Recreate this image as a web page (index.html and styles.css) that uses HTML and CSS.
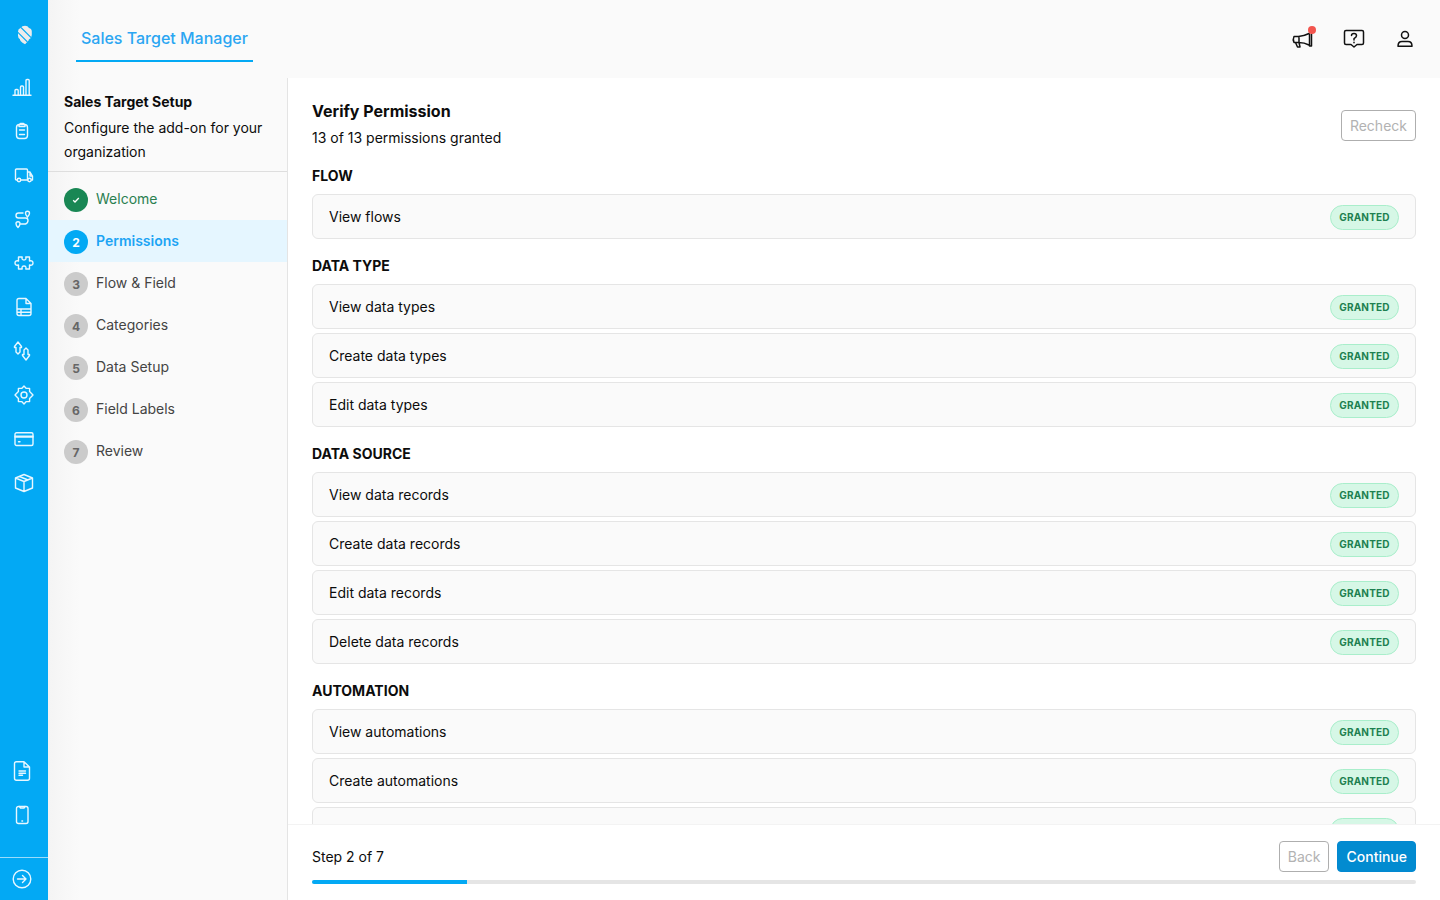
FILE: index.html
```html
<!DOCTYPE html>
<html lang="en">
<head>
<meta charset="utf-8">
<meta name="viewport" content="width=device-width, initial-scale=1">
<title>Sales Target Manager</title>
<link rel="stylesheet" href="styles.css">
</head>
<body>
<div class="app">
  <nav class="rail" aria-label="Main">
    <a class="rail-logo" href="#" aria-label="Home"><svg width="16" height="20" viewBox="0 0 16 20"><clipPath id="leaf"><path d="M8 .8Q5 .8 3.600 3 1 3.800 1 6.500v4Q1 13 2.800 14q.5 3 2.700 3.700L8 19.200l2.500-2.500q1.200-.6 1.400-2.200 2.900-1.500 2.900-4.500V6.500q0-3-2.800-3.500Q10.800.8 8 .8z"/></clipPath><g clip-path="url(#leaf)"><path fill="#ececec" d="M0 0h16v20H0z"/><path d="M2 .5 17 15.500M-1 5.500l14 14" stroke="#03a9f4" stroke-width="1.100" fill="none"/></g></svg></a>
    <a class="rail-link" href="#" aria-label="Dashboard"><svg viewBox="0 0 20 20"><path d="M1 18.200h18M3 18v-4.500q0-1 1-1h1.200q1 0 1 1V18M8.500 18v-8q0-1 1-1h1q1 0 1 1v8M14 18V3.500q0-1 1-1h1.200q1 0 1 1V18"/></svg></a>
    <a class="rail-link" href="#" aria-label="Tasks"><svg viewBox="0 0 20 20"><rect x="4.500" y="3.500" width="11" height="14" rx="3"/><path d="M7 5.500V4l1.500-1.500h3L13 4v1.500zM7.500 9h5M7.500 13.500h5"/></svg></a>
    <a class="rail-link wide" href="#" aria-label="Deliveries"><svg viewBox="0 0 20 20"><path d="M3.500 15H2.500q-1 0-1-1V5q0-1 1-1h10q1 0 1 1v10H7M13.500 7h2.500l2.500 4v4h-1M16 7v4h2.500"/><circle cx="5" cy="15" r="1.700"/><circle cx="15.500" cy="15" r="1.700"/></svg></a>
    <a class="rail-link" href="#" aria-label="Routes"><svg viewBox="0 0 20 20"><path d="M11 4H6.500Q4 4 4 6.500T6.500 9h7q2.500 0 2.500 2.500T13.500 15H9M15.500 8q-2-2.200-2-3.800a2 2 0 0 1 4 0Q17.500 5.800 15.500 8zM6 18.500q-2-2.200-2-3.800a2 2 0 0 1 4 0Q8 16.300 6 18.500z"/></svg></a>
    <a class="rail-link wide" href="#" aria-label="Add-ons"><svg viewBox="0 0 20 20"><path d="M4.500 4h3.700q-.8 3 1.800 3t1.800-3h3.700v4q3.500-.8 3.500 2t-3.500 2v4h-3.700q.8-3-1.800-3t-1.800 3H4.500v-4Q1 12.800 1 10t3.500-2z"/></svg></a>
    <a class="rail-link wide" href="#" aria-label="Reports"><svg viewBox="0 0 20 20"><path d="M12 1.500H5q-2 0-2 2v13q0 2 2 2h10q2 0 2-2v-10zM12 1.500v5h5M3 12h14M3 15.200h14M7 12v6.500"/></svg></a>
    <a class="rail-link" href="#" aria-label="Transfers"><svg viewBox="0 0 20 20"><path d="M6 1 9.500 5.500v1H8V11L6 13 4 11V6.500H2.500v-1zM14 19l-3.500-4.500v-1H12V9l2-2 2 2v4.500h1.500v1z"/></svg></a>
    <a class="rail-link wide" href="#" aria-label="Settings"><svg viewBox="0 0 20 20"><path d="m10 1 2.300 2.400h3.300v3.200L19 10l-3.400 3.400v3.200h-3.300L10 19l-2.300-2.400H4.400v-3.200L1 10l3.400-3.400V3.400h3.300z"/><circle cx="10" cy="10" r="3"/></svg></a>
    <a class="rail-link wide" href="#" aria-label="Billing"><svg viewBox="0 0 20 20"><rect x="1" y="3.800" width="18" height="12.700" rx="1.500"/><path d="M1 7.200h18M1 8h18M4.500 12.800h1.500"/></svg></a>
    <a class="rail-link wide" href="#" aria-label="Products"><svg viewBox="0 0 20 20"><path d="m10 1.500 8.500 3.500v10L10 18.500 1.500 15V5zM1.500 5 10 8.500 18.500 5M10 8.500v10M5.500 3.500 14 7"/></svg></a>
    <div class="rail-bottom">
      <a class="rail-link" href="#" aria-label="Documents"><svg viewBox="0 0 20 20"><path d="M12 .7H4.500q-2 0-2 2v14.600q0 2 2 2h11q2 0 2-2V6zM12 .7V6h5.500M7 10h6.500M7 12.200h6.500M7 14.300h3.500"/></svg></a>
      <a class="rail-link" href="#" aria-label="Mobile"><svg viewBox="0 0 20 20"><rect x="4.500" y="1.500" width="11.500" height="17" rx="2"/><path d="M7.500 1.500 8.500 3H12l1-1.500M9.900 16h.7"/></svg></a>
    </div>
    <a class="rail-expand" href="#" aria-label="Expand menu"><svg viewBox="0 0 20 20"><circle cx="10" cy="10" r="8.800"/><path d="M5.500 10h8.500M10.500 6.500 14 10l-3.500 3.500"/></svg></a>
  </nav>

  <div class="page">
    <header class="topbar">
      <a class="tab" href="#">Sales Target Manager</a>
      <div class="tools">
        <button class="tool" aria-label="Announcements"><svg width="24" height="24" viewBox="0 0 24 24"><path d="M3 9.500h4.500Q13 9 18 6.500M3 9.500Q1.500 12.500 3 15.500h4.500q6 0 10.500 2.500M8 9.500v6M4.500 15.500 6.500 20h2.500L8 15.500M18.500 7v12h2V7"/></svg><span class="dot"></span></button>
        <button class="tool" aria-label="Help"><svg width="24" height="24" viewBox="0 0 24 24"><path d="M4 3.500h16q1.500 0 1.500 1.500v11q0 1.500-1.500 1.500h-5l-3 2.500-3-2.500H4q-1.500 0-1.500-1.500V5Q2.500 3.500 4 3.500zM9.500 8.500Q9.500 6.500 12 6.500t2.500 2.200Q14.500 10 12 11.700V13M12 15.300v.4"/></svg></button>
        <button class="tool" aria-label="Account"><svg width="24" height="24" viewBox="0 0 24 24"><circle cx="12" cy="8" r="3.500"/><path d="M5 19.200q0-4.700 4-4.700h6q4 0 4 4.700z"/></svg></button>
      </div>
    </header>

    <div class="body">
      <aside class="setup">
        <div class="setup-head">
          <h2>Sales Target Setup</h2>
          <p>Configure the add-on for your organization</p>
        </div>
        <ol class="steps">
          <li class="step done"><span class="num"><svg width="8" height="8" viewBox="0 0 8 8"><path d="m1.200 4.200 1.800 1.800L6.800 2"/></svg></span><span class="name">Welcome</span></li>
          <li class="step current" aria-current="step"><span class="num">2</span><span class="name">Permissions</span></li>
          <li class="step"><span class="num">3</span><span class="name">Flow &amp; Field</span></li>
          <li class="step"><span class="num">4</span><span class="name">Categories</span></li>
          <li class="step"><span class="num">5</span><span class="name">Data Setup</span></li>
          <li class="step"><span class="num">6</span><span class="name">Field Labels</span></li>
          <li class="step"><span class="num">7</span><span class="name">Review</span></li>
        </ol>
      </aside>

      <main class="main">
        <div class="scroll">
          <div class="intro">
            <div>
              <h1>Verify Permission</h1>
              <p>13 of 13 permissions granted</p>
            </div>
            <button class="btn" disabled>Recheck</button>
          </div>
          <section class="group">
            <h3>FLOW</h3>
            <ul>
              <li class="perm">View flows<span class="badge">GRANTED</span></li>
            </ul>
          </section>
          <section class="group">
            <h3>DATA TYPE</h3>
            <ul>
              <li class="perm">View data types<span class="badge">GRANTED</span></li>
              <li class="perm">Create data types<span class="badge">GRANTED</span></li>
              <li class="perm">Edit data types<span class="badge">GRANTED</span></li>
            </ul>
          </section>
          <section class="group">
            <h3>DATA SOURCE</h3>
            <ul>
              <li class="perm">View data records<span class="badge">GRANTED</span></li>
              <li class="perm">Create data records<span class="badge">GRANTED</span></li>
              <li class="perm">Edit data records<span class="badge">GRANTED</span></li>
              <li class="perm">Delete data records<span class="badge">GRANTED</span></li>
            </ul>
          </section>
          <section class="group">
            <h3>AUTOMATION</h3>
            <ul>
              <li class="perm">View automations<span class="badge">GRANTED</span></li>
              <li class="perm">Create automations<span class="badge">GRANTED</span></li>
              <li class="perm"><span class="badge"></span></li>
            </ul>
          </section>
        </div>
        <footer class="footer">
          <div class="footer-row">
            <span>Step 2 of 7</span>
            <div class="actions">
              <button class="btn" disabled>Back</button>
              <button class="btn primary">Continue</button>
            </div>
          </div>
          <div class="track" role="progressbar" aria-label="Setup progress" aria-valuenow="14" aria-valuemin="0" aria-valuemax="100"><div class="fill" style="width:14%"></div></div>
        </footer>
      </main>
    </div>
  </div>
</div>
</body>
</html>
```
FILE: styles.css
```css
* { box-sizing: border-box; }
body, h1, h2, h3, p, ul, ol { margin: 0; padding: 0; }
ul, ol { list-style: none; }
body {
  font: 14px/21px Inter, "Liberation Sans", sans-serif;
  color: #0c0c0c;
  background: #fff;
}
a { color: inherit; text-decoration: none; }
button { font: inherit; cursor: pointer; }
.app { display: flex; height: 100vh; overflow: hidden; }

.rail {
  width: 48px;
  flex: none;
  display: flex;
  flex-direction: column;
  background: #03a9f4;
}
.rail svg { display: block; }
.rail-logo { height: 65px; padding: 25px 0 0 17px; }
.rail-link { display: flex; align-items: center; height: 44px; padding-left: 12px; }
.rail-link.wide { padding-left: 14px; }
.rail-link svg, .rail-expand svg {
  width: 20px;
  height: 20px;
  fill: none;
  stroke: #e8f7ff;
  stroke-width: 1.4;
  stroke-linejoin: round;
  stroke-linecap: round;
}
.rail-bottom { margin-top: auto; padding-bottom: 20px; }
.rail-expand {
  display: flex;
  align-items: center;
  height: 43px;
  padding-left: 12px;
  border-top: 1px solid #9bdcfb;
}

.page { flex: 1; min-width: 0; display: flex; flex-direction: column; background: linear-gradient(90deg, #f4f4f4, #fafafa 32px); }
.topbar {
  flex: none;
  display: flex;
  justify-content: space-between;
  align-items: flex-start;
  height: 78px;
  padding: 16px 23px 0 28px;
}
.tab {
  padding: 10px 5px;
  border-bottom: 2px solid #03a9f4;
  font-size: 16px;
  line-height: 24px;
  font-weight: 500;
  color: #2ba6f2;
}
.tools { display: flex; gap: 27px; padding-top: 11px; }
.tool { position: relative; display: block; width: 24px; height: 24px; padding: 0; border: 0; background: none; }
.tool svg { display: block; fill: none; stroke: #111; stroke-width: 1.5; stroke-linejoin: round; stroke-linecap: round; }
.dot { position: absolute; top: -1px; right: -1px; width: 8px; height: 8px; border-radius: 50%; background: #f2554e; }

.body { flex: 1; min-height: 0; display: flex; }
.setup { width: 240px; flex: none; border-right: 1px solid #e4e4e4; }
.setup-head { padding: 14px 16px 7px; border-bottom: 1px solid #dedede; }
.setup-head h2 { font-size: 14px; line-height: 19px; font-weight: 700; padding-bottom: 5px; }
.setup-head p { line-height: 24px; }
.steps { padding-top: 6px; }
.step { display: flex; gap: 8px; padding: 10px 16px 8px; color: #444; }
.num {
  display: flex;
  align-items: center;
  justify-content: center;
  width: 24px;
  height: 24px;
  border-radius: 50%;
  background: #cbcbcb;
  color: #666;
  font-size: 12px;
  font-weight: 700;
}
.num svg { fill: none; stroke: #fff; stroke-width: 1.3; }
.done { color: #2a8050; }
.done .num { background: #198754; }
.current { background: #e5f6ff; color: #1ca4f4; font-weight: 600; }
.current .num { background: #03a9f4; color: #fff; }

.main { flex: 1; min-width: 0; display: flex; flex-direction: column; background: #fff; }
.scroll { flex: 1; min-height: 0; overflow-y: auto; scrollbar-width: none; padding: 24px 24px 0; }
.intro { display: flex; justify-content: space-between; align-items: center; }
.intro h1 { font-size: 16px; line-height: 18px; font-weight: 700; padding-bottom: 6px; }
.intro p { line-height: 23px; }
.btn {
  height: 31px;
  padding: 0 8px;
  border: 1px solid #aeaeae;
  border-radius: 4px;
  background: #fff;
  color: #0c0c0c;
}
.btn:disabled { color: #b2b2b2; cursor: default; }
.btn.primary { border-color: #0288d1; background: #028bd0; color: #fff; font-weight: 500; }
.group { padding-top: 16px; }
.group h3 { font-size: 14px; line-height: 21px; font-weight: 700; padding-bottom: 8px; }
.group ul { display: grid; gap: 4px; }
.perm {
  display: flex;
  align-items: flex-start;
  justify-content: space-between;
  min-height: 45px;
  padding: 10px 16px 8px;
  border: 1px solid #e5e5e5;
  border-radius: 6px;
  background: #fafafa;
  line-height: 23px;
}
.badge {
  min-width: 69px;
  min-height: 25px;
  margin-left: auto;
  padding: 0 8px;
  border: 1px solid #a9eecb;
  border-radius: 13px;
  background: #d6f7e6;
  color: #1d8050;
  font-size: 10px;
  line-height: 23px;
  font-weight: 700;
  letter-spacing: 0.02em;
  text-align: center;
}
.footer { flex: none; padding: 16px 24px; border-top: 1px solid #f3f3f3; }
.footer-row { display: flex; justify-content: space-between; align-items: center; padding-bottom: 8px; }
.actions { display: flex; gap: 8px; }
.track { height: 4px; border-radius: 2px; background: #e5e5e5; overflow: hidden; }
.fill { height: 100%; background: #03a9f4; }
```
